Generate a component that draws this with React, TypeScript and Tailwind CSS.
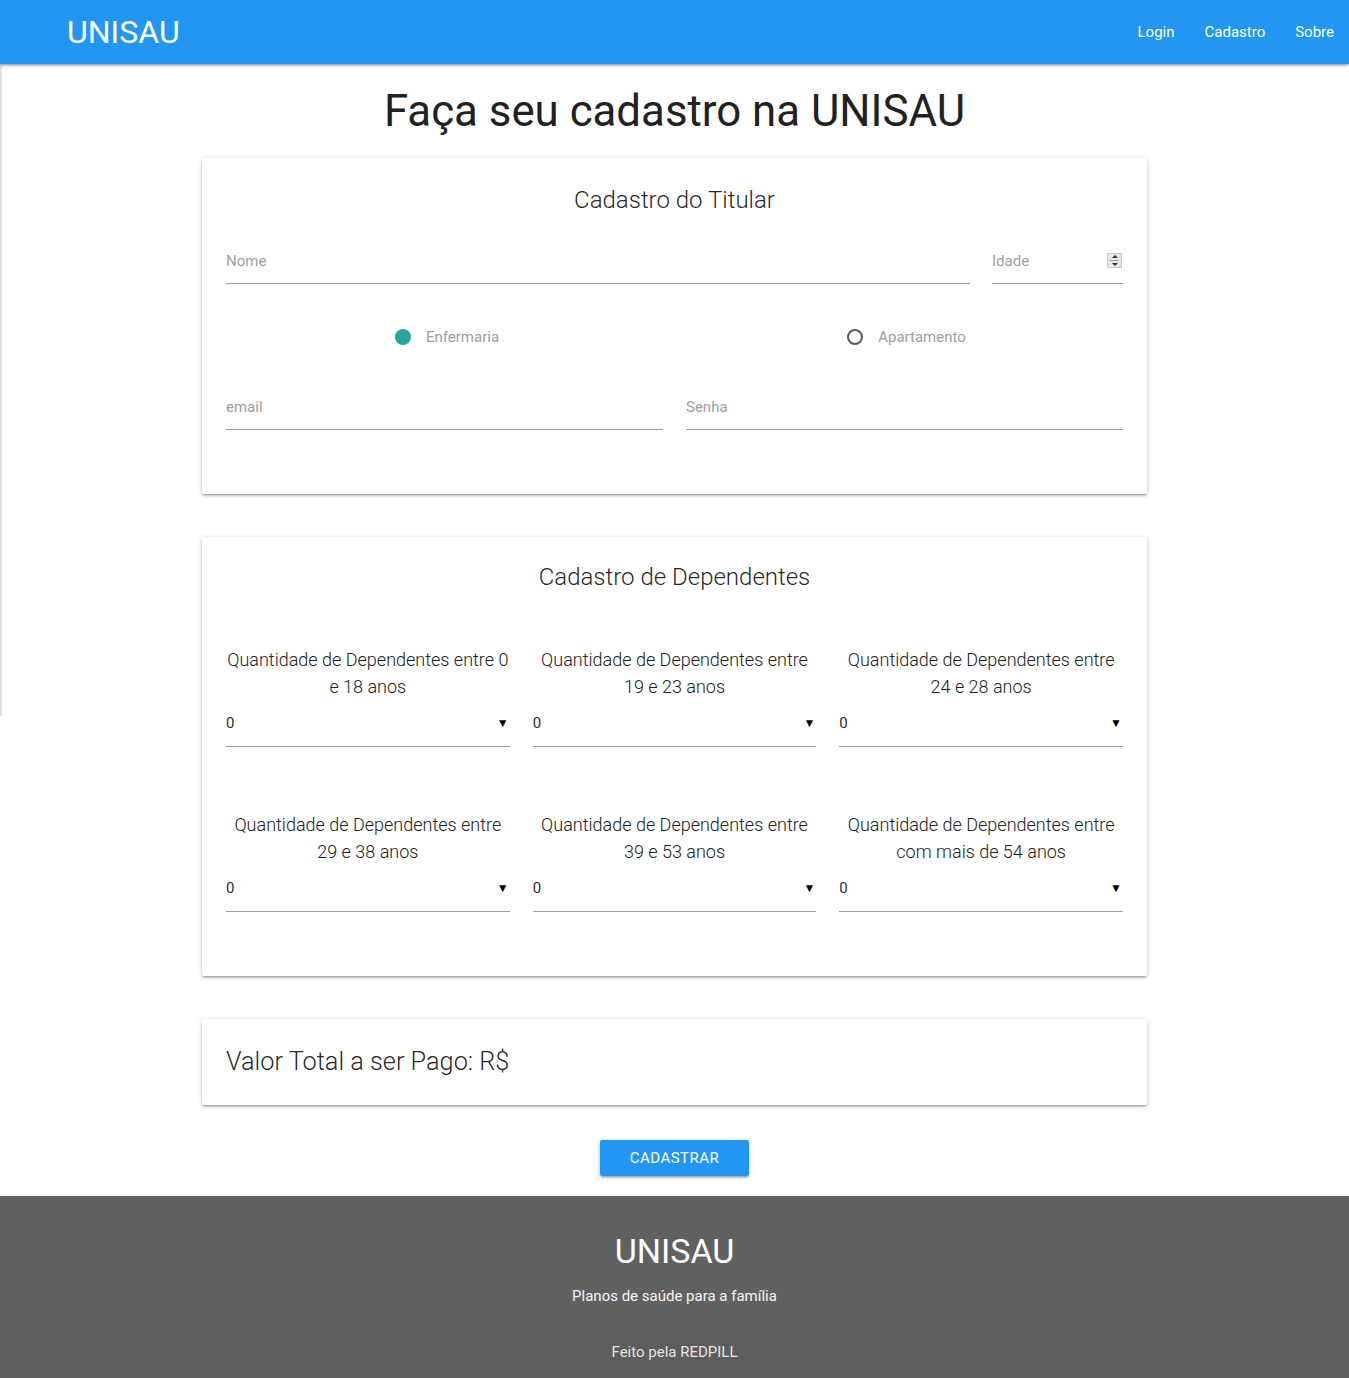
import React from 'react';

const font = { fontFamily: 'Roboto, "Noto Sans", sans-serif' };

const cardShadow =
  'shadow-[0_2px_2px_0_rgba(0,0,0,0.14),0_3px_1px_-2px_rgba(0,0,0,0.12),0_1px_5px_0_rgba(0,0,0,0.2)]';

const TextField: React.FC<{ label: string; className?: string; spinner?: boolean }> = ({
  label,
  className = '',
  spinner,
}) => (
  <div className={`relative h-[48px] border-b border-[#9e9e9e] flex items-center ${className}`}>
    <span className="text-[15px] text-[#9e9e9e] pt-[4px]">{label}</span>
    {spinner && (
      <div className="absolute right-[1px] top-[17px] w-[15px] h-[15px] bg-[#e8e8e8] border border-[#c8c8c8] flex flex-col items-center justify-center gap-[2px]">
        <div className="w-0 h-0 border-l-[3px] border-r-[3px] border-b-[3px] border-l-transparent border-r-transparent border-b-[#333]" />
        <div className="w-[9px] h-px bg-[#999]" />
        <div className="w-0 h-0 border-l-[3px] border-r-[3px] border-t-[3px] border-l-transparent border-r-transparent border-t-[#333]" />
      </div>
    )}
  </div>
);

const Radio: React.FC<{ label: string; checked?: boolean }> = ({ label, checked }) => (
  <div className="flex items-center h-[20px]">
    {checked ? (
      <span className="w-[16px] h-[16px] rounded-full bg-[#26a69a]" />
    ) : (
      <span className="w-[16px] h-[16px] rounded-full border-2 border-[#5a5a5a]" />
    )}
    <span className="ml-[15px] text-[15px] text-[#9e9e9e]">{label}</span>
  </div>
);

const SelectField: React.FC<{ label: React.ReactNode }> = ({ label }) => (
  <div>
    <div className="text-[18px] font-light leading-[27px] text-[#212121] text-center">{label}</div>
    <div className="h-[47px] border-b border-[#9e9e9e] flex items-center justify-between">
      <span className="text-[15px] text-[rgba(0,0,0,0.87)]">0</span>
      <span className="text-[12px] text-black pr-[1px]">▼</span>
    </div>
  </div>
);

const dependentes = [
  'Quantidade de Dependentes entre 0 e 18 anos',
  'Quantidade de Dependentes entre 19 e 23 anos',
  'Quantidade de Dependentes entre 24 e 28 anos',
  'Quantidade de Dependentes entre 29 e 38 anos',
  'Quantidade de Dependentes entre 39 e 53 anos',
  'Quantidade de Dependentes entre com mais de 54 anos',
];

export default function App() {
  return (
    <div className="relative min-h-[1378px] bg-white flex flex-col" style={font}>
      {/* hidden sidenav edge */}
      <div className="absolute left-0 top-[64px] h-[652px] w-[3px] bg-gradient-to-r from-[#d4d4d4] to-transparent" />

      <nav
        className={`h-[64px] bg-[#2196f3] flex items-center justify-between relative z-10 ${cardShadow}`}
      >
        <a className="pl-[67px] text-[32px] text-white leading-[64px]">UNISAU</a>
        <ul className="flex">
          {['Login', 'Cadastro', 'Sobre'].map((item) => (
            <li key={item} className="px-[15px] text-[15px] text-white leading-[64px]">
              {item}
            </li>
          ))}
        </ul>
      </nav>

      <main className="w-[945px] mx-auto flex flex-col">
        <h3 className="mt-[23px] mb-[23px] text-[43.8px] leading-[48px] text-[#212121] text-center">
          Faça seu cadastro na UNISAU
        </h3>

        {/* Titular */}
        <section className={`bg-white rounded-[2px] px-[24px] pt-[26px] pb-[64px] ${cardShadow}`}>
          <div className="text-[24px] font-light leading-[32px] text-[rgba(0,0,0,0.87)] text-center">
            Cadastro do Titular
          </div>
          <div className="mt-[20px] flex gap-[22px]">
            <TextField label="Nome" className="flex-1" />
            <TextField label="Idade" className="w-[131px]" spinner />
          </div>
          <div className="mt-[43px] mb-[-1px] grid grid-cols-2 gap-[23px]">
            <div className="flex justify-center pl-[5px]">
              <Radio label="Enfermaria" checked />
            </div>
            <div className="flex justify-center pl-[4px]">
              <Radio label="Apartamento" />
            </div>
          </div>
          <div className="mt-[36px] grid grid-cols-2 gap-[23px]">
            <TextField label="email" />
            <TextField label="Senha" />
          </div>
        </section>

        {/* Dependentes */}
        <section
          className={`mt-[43px] bg-white rounded-[2px] px-[24px] pt-[24px] pb-[64px] ${cardShadow}`}
        >
          <div className="text-[24px] font-light leading-[32px] text-[rgba(0,0,0,0.87)] text-center">
            Cadastro de Dependentes
          </div>
          <div className="mt-[53px] grid grid-cols-3 gap-x-[23px] gap-y-[64px]">
            {dependentes.map((d) => (
              <SelectField key={d} label={d} />
            ))}
          </div>
        </section>

        {/* Total */}
        <section className={`mt-[43px] bg-white rounded-[2px] px-[24px] py-[24px] ${cardShadow}`}>
          <div className="text-[25.3px] font-light leading-[38px] text-[rgba(0,0,0,0.87)]">
            Valor Total a ser Pago: R$
          </div>
        </section>

        <div className="mt-[35px] mb-[20px] flex justify-center">
          <button
            className={`h-[36px] px-[30px] bg-[#2196f3] text-white text-[15px] uppercase tracking-[0.5px] rounded-[2px] ${cardShadow}`}
          >
            Cadastrar
          </button>
        </div>
      </main>

      <footer className="mt-auto bg-[#616161] text-white">
        <div className="h-[131px] flex flex-col items-center pt-[36px]">
          <h4 className="text-[34px] leading-[38px]">UNISAU</h4>
          <p className="mt-[15px] text-[15px] text-[#f5f5f5]">Planos de saúde para a família</p>
        </div>
        <div className="h-[51px] bg-[rgba(51,51,51,0.08)] flex items-center justify-center text-[15px] text-[rgba(255,255,255,0.85)]">
          Feito pela REDPILL
        </div>
      </footer>
    </div>
  );
}
